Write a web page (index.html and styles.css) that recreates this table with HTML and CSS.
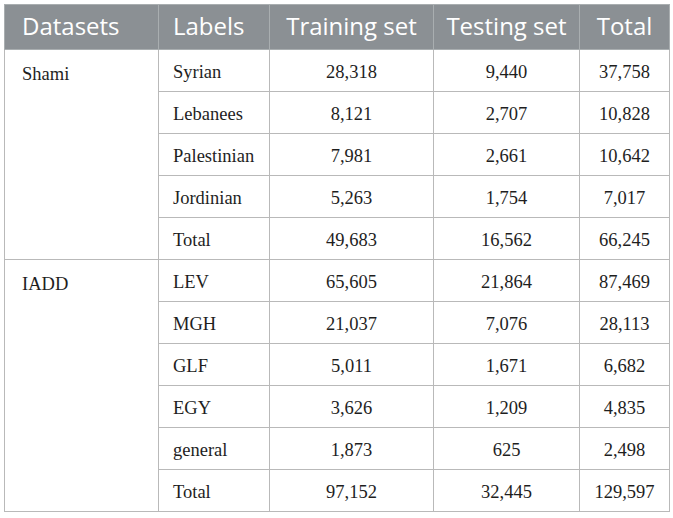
FILE: index.html
```html
<!DOCTYPE html>
<html>
<head>
<meta charset="utf-8">
<link rel="stylesheet" href="styles.css">
</head>
<body>
<table class="data">
  <colgroup>
    <col class="c1"><col class="c2"><col class="c3"><col class="c4"><col class="c5">
  </colgroup>
  <thead>
    <tr>
      <th class="left first">Datasets</th>
      <th class="left">Labels</th>
      <th>Training set</th>
      <th>Testing set</th>
      <th>Total</th>
    </tr>
  </thead>
  <tbody>
    <tr><td class="group" rowspan="5">Shami</td><td class="label">Syrian</td><td>28,318</td><td>9,440</td><td>37,758</td></tr>
    <tr><td class="label">Lebanees</td><td>8,121</td><td>2,707</td><td>10,828</td></tr>
    <tr><td class="label">Palestinian</td><td>7,981</td><td>2,661</td><td>10,642</td></tr>
    <tr><td class="label">Jordinian</td><td>5,263</td><td>1,754</td><td>7,017</td></tr>
    <tr><td class="label">Total</td><td>49,683</td><td>16,562</td><td>66,245</td></tr>
    <tr><td class="group" rowspan="6">IADD</td><td class="label">LEV</td><td>65,605</td><td>21,864</td><td>87,469</td></tr>
    <tr><td class="label">MGH</td><td>21,037</td><td>7,076</td><td>28,113</td></tr>
    <tr><td class="label">GLF</td><td>5,011</td><td>1,671</td><td>6,682</td></tr>
    <tr><td class="label">EGY</td><td>3,626</td><td>1,209</td><td>4,835</td></tr>
    <tr><td class="label">general</td><td>1,873</td><td>625</td><td>2,498</td></tr>
    <tr><td class="label">Total</td><td>97,152</td><td>32,445</td><td>129,597</td></tr>
  </tbody>
</table>
</body>
</html>
```
FILE: styles.css
```css
html, body {
  margin: 0;
  padding: 0;
  background: #ffffff;
}
body {
  padding: 4px;
}
.data {
  border-collapse: collapse;
  table-layout: fixed;
  width: 665px;
  border: 1px solid #b0b7b3;
}
.c1 { width: 154px; }
.c2 { width: 111px; }
.c3 { width: 164px; }
.c4 { width: 146px; }
.c5 { width: 90px; }
.data th {
  height: 45px;
  padding: 0 0 1px 0;
  background: #8b9094;
  color: #ffffff;
  font-family: "Open Sans", Lato, sans-serif;
  font-weight: 400;
  font-size: 24px;
  line-height: 1.2;
  text-align: center;
  border: 1px solid #a9aeb0;
  box-sizing: border-box;
}
.data th.left {
  text-align: left;
  padding-left: 14px;
}
.data th.first {
  padding-left: 17px;
}
.data td {
  height: 38px;
  padding: 3px 0 0 0;
  font-family: "Liberation Serif", "Times New Roman", serif;
  font-size: 18.5px;
  color: #1e1e1e;
  text-align: center;
  border: 1px solid #b9b9b9;
  vertical-align: middle;
}
.data td.label {
  text-align: left;
  padding-left: 14px;
}
.data td.group {
  text-align: left;
  vertical-align: top;
  padding: 14px 0 0 17px;
}
```
